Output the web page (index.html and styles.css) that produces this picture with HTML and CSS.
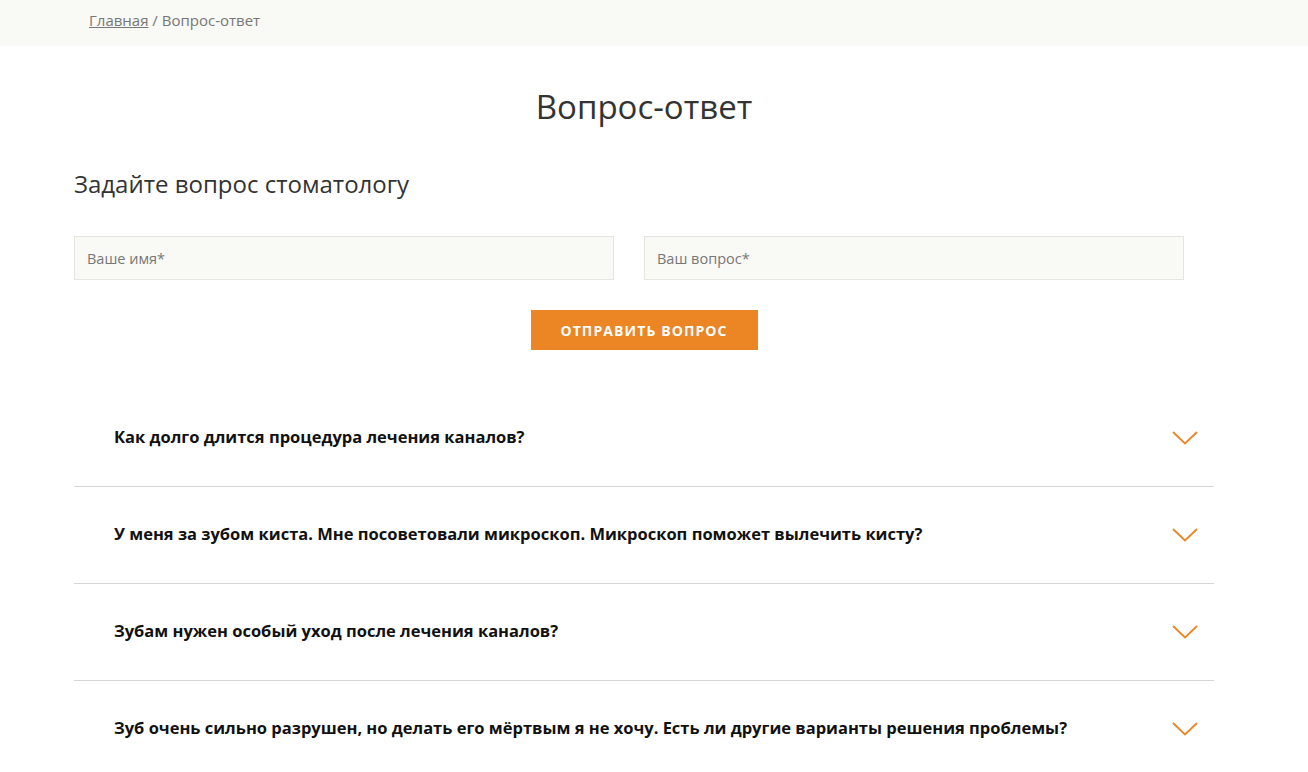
FILE: index.html
```html
<!DOCTYPE html>
<html lang="ru">
<head>
    <meta charset="UTF-8">
    <meta name="viewport" content="width=device-width, initial-scale=1.0">
    <title>Вопрос-ответ</title>
    <link rel="stylesheet" href="styles.css">
</head>
<body>
    <div class="crumbs">
        <div class="container">
            <a href="#">Главная</a> / Вопрос-ответ
        </div>
    </div>

    <div class="container page">
        <h1>Вопрос-ответ</h1>

        <h2>Задайте вопрос стоматологу</h2>

        <form class="ask" onsubmit="return false">
            <div class="fields">
                <input type="text" placeholder="Ваше имя*">
                <input type="text" placeholder="Ваш вопрос*">
            </div>
            <button type="submit">Отправить вопрос</button>
        </form>

        <div class="faq">
            <div class="faq-item">
                <span>Как долго длится процедура лечения каналов?</span>
                <svg class="arrow" width="26" height="14" viewBox="0 0 26 14"><polyline points="1,1 13,12.5 25,1"/></svg>
            </div>
            <div class="faq-item">
                <span>У меня за зубом киста. Мне посоветовали микроскоп. Микроскоп поможет вылечить кисту?</span>
                <svg class="arrow" width="26" height="14" viewBox="0 0 26 14"><polyline points="1,1 13,12.5 25,1"/></svg>
            </div>
            <div class="faq-item">
                <span>Зубам нужен особый уход после лечения каналов?</span>
                <svg class="arrow" width="26" height="14" viewBox="0 0 26 14"><polyline points="1,1 13,12.5 25,1"/></svg>
            </div>
            <div class="faq-item">
                <span>Зуб очень сильно разрушен, но делать его мёртвым я не хочу. Есть ли другие варианты решения проблемы?</span>
                <svg class="arrow" width="26" height="14" viewBox="0 0 26 14"><polyline points="1,1 13,12.5 25,1"/></svg>
            </div>
        </div>
    </div>
</body>
</html>
```

FILE: styles.css
```css
body {
    margin: 0;
    font-family: "Open Sans", "Liberation Sans", sans-serif;
    color: #333;
    background: #fff;
}
.container {
    width: 1140px;
    margin-left: 74px;
}
.crumbs {
    background: #f9f9f5;
    height: 46px;
    line-height: 40px;
    font-size: 15px;
    color: #777;
}
.crumbs .container {
    padding-left: 15px;
    box-sizing: border-box;
}
.crumbs a {
    color: #777;
}
h1 {
    margin: 41px 0 0;
    font-size: 33px;
    font-weight: 400;
    line-height: 40px;
    text-align: center;
}
h2 {
    margin: 42px 0 0;
    font-size: 24px;
    font-weight: 400;
    line-height: 30px;
}
.ask {
    margin-top: 37px;
    text-align: center;
}
.fields {
    display: grid;
    grid-template-columns: 540px 540px;
    gap: 30px;
}
.fields input {
    height: 44px;
    box-sizing: border-box;
    border: 1px solid #e6e6e0;
    background: #f9f9f5;
    padding: 0 12px;
    font-family: inherit;
    font-size: 14.5px;
    color: #333;
    outline: none;
}
.fields input::placeholder {
    color: #777;
}
button {
    margin-top: 30px;
    width: 227px;
    height: 40px;
    border: none;
    background: #ec8523;
    color: #fff;
    font-family: inherit;
    font-weight: 700;
    font-size: 14px;
    letter-spacing: 1.1px;
    text-transform: uppercase;
    cursor: pointer;
}
.faq {
    margin-top: 40px;
}
.faq-item {
    display: flex;
    align-items: center;
    justify-content: space-between;
    height: 96px;
    padding: 0 16px 0 40px;
    border-bottom: 1px solid #d4d4d4;
    font-size: 16.5px;
    font-weight: 700;
    color: #111;
}
.faq-item span {
    padding-bottom: 4px;
}
.faq-item:last-child {
    border-bottom: none;
}
.arrow {
    fill: none;
    stroke: #ec8523;
    stroke-width: 1.8;
}
```
